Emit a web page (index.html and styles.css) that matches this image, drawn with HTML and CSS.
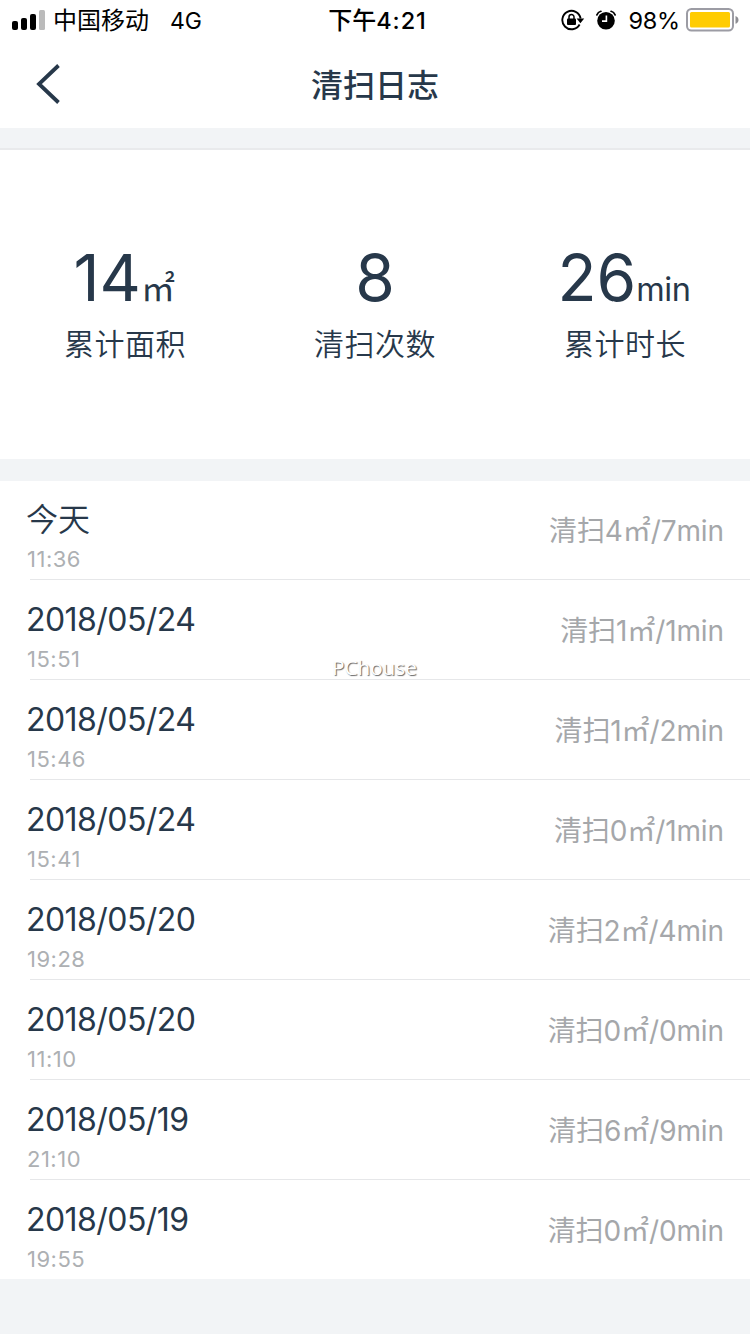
FILE: index.html
```
<!DOCTYPE html>
<html lang="zh-CN">
  <head>
    <meta charset="UTF-8" />
    <meta name="viewport" content="width=device-width, initial-scale=1.0" />
    <title>清扫日志</title>
    <link rel="stylesheet" href="styles.css">
  </head>
  <body>
    <div class="status-bar">
      <div class="status-left">
        <svg class="signal" width="34" height="22" viewBox="0 0 34 22">
          <rect x="0" y="12" width="6" height="9" rx="2" />
          <rect x="9" y="9" width="6" height="12" rx="2" />
          <rect x="18" y="5" width="6" height="16" rx="2" />
          <rect x="27" y="1" width="6" height="20" rx="1.5" fill="#bbb" />
        </svg>
        <span class="carrier">中国移动</span>
        <span class="network">4G</span>
      </div>
      <div class="status-time">下午<span>4:21</span></div>
      <div class="status-right">
        <svg class="lock" width="24" height="22" viewBox="0 0 24 22">
          <path d="M18.6 15.5A9.2 9.2 0 1 1 19.6 9.5" fill="none" stroke="#000" stroke-width="1.9" />
          <path d="M15.6 9.6h7.6l-3.8 4.6z" />
          <rect x="6" y="9.4" width="9" height="6.6" rx="1" />
          <path d="M8 10V8a2.5 2.5 0 0 1 5 0v2" fill="none" stroke="#000" stroke-width="1.5" />
        </svg>
        <svg class="alarm" width="20" height="20" viewBox="0 0 20 20">
          <circle cx="10" cy="10.7" r="8.8" />
          <path d="M.9 4.9A6 6 0 0 1 4.9 1.3M19.1 4.9A6 6 0 0 0 15.1 1.3" fill="none" stroke="#000" stroke-width="1.7" stroke-linecap="round" />
          <path d="M10.4 5.4v5.7H6" fill="none" stroke="#fff" stroke-width="1.6" />
        </svg>
        <span class="percent">98%</span>
        <svg class="battery" width="53" height="24" viewBox="0 0 53 24">
          <rect x="1" y="1" width="46" height="21.5" rx="4.5" fill="#fff" stroke="#9c9ca4" stroke-width="2" />
          <rect x="4" y="4" width="40" height="15.5" rx="1.5" fill="#fc0" />
          <path d="M49.5 8q3 1.2 3 3.9t-3 3.9z" fill="#8e8e93" />
        </svg>
      </div>
    </div>
    <header>
      <svg class="back" width="26" height="42" viewBox="0 0 26 42">
        <path d="M22.5 2.5L3 21L22.5 39.5" fill="none" stroke="#27384a" stroke-width="3.8" />
      </svg>
      <h1>清扫日志</h1>
    </header>
    <section class="summary">
      <div class="stat">
        <div class="value">14<span class="unit sqm">㎡</span></div>
        <div class="label">累计面积</div>
      </div>
      <div class="stat">
        <div class="value">8</div>
        <div class="label">清扫次数</div>
      </div>
      <div class="stat">
        <div class="value">26<span class="unit">min</span></div>
        <div class="label">累计时长</div>
      </div>
    </section>
    <ul class="log">
      <li>
        <div class="when"><p class="date today">今天</p><p class="time">11:36</p></div>
        <p class="detail">清扫4㎡/7min</p>
      </li>
      <li>
        <div class="when"><p class="date">2018/05/24</p><p class="time">15:51</p></div>
        <p class="detail">清扫1㎡/1min</p>
      </li>
      <li>
        <div class="when"><p class="date">2018/05/24</p><p class="time">15:46</p></div>
        <p class="detail">清扫1㎡/2min</p>
      </li>
      <li>
        <div class="when"><p class="date">2018/05/24</p><p class="time">15:41</p></div>
        <p class="detail">清扫0㎡/1min</p>
      </li>
      <li>
        <div class="when"><p class="date">2018/05/20</p><p class="time">19:28</p></div>
        <p class="detail">清扫2㎡/4min</p>
      </li>
      <li>
        <div class="when"><p class="date">2018/05/20</p><p class="time">11:10</p></div>
        <p class="detail">清扫0㎡/0min</p>
      </li>
      <li>
        <div class="when"><p class="date">2018/05/19</p><p class="time">21:10</p></div>
        <p class="detail">清扫6㎡/9min</p>
      </li>
      <li>
        <div class="when"><p class="date">2018/05/19</p><p class="time">19:55</p></div>
        <p class="detail">清扫0㎡/0min</p>
      </li>
    </ul>
    <div class="watermark">PChouse</div>
  </body>
</html>
```

FILE: styles.css
```
* {
  box-sizing: border-box;
}
body {
  position: relative;
  margin: 0;
  height: 1334px;
  overflow: hidden;
  background-color: #f2f4f6;
  color: #27384a;
  font-family: Inter, "Noto Sans CJK SC", sans-serif;
}
h1,
p,
ul {
  margin: 0;
  padding: 0;
}
svg {
  display: block;
  flex: none;
}

.status-bar {
  display: grid;
  grid-template-columns: 1fr auto 1fr;
  align-items: center;
  height: 40px;
  padding: 0 11px 0 12px;
  background-color: #fff;
  color: #000;
  font-size: 24px;
  line-height: 38px;
  white-space: nowrap;
}
.status-left,
.status-right {
  display: flex;
  align-items: center;
}
.status-right {
  justify-content: flex-end;
}
.carrier,
.network,
.status-time,
.percent {
  padding-top: 2px;
}
.carrier {
  margin-left: 7px;
}
.network {
  margin-left: 21px;
  font-size: 23px;
}
.status-time {
  padding-left: 4px;
  font-weight: 500;
}
.status-time span {
  font-size: 23.5px;
  font-weight: 550;
  letter-spacing: 0.9px;
}
.alarm {
  margin: 0 12px 0 11px;
}
.percent {
  font-size: 23.5px;
  letter-spacing: -0.2px;
}
.battery {
  margin-left: 6px;
}

header {
  display: grid;
  grid-template-columns: 1fr auto 1fr;
  align-items: center;
  height: 88px;
  padding: 0 36px;
  background-color: #fff;
}
h1 {
  padding-top: 4px;
  font-size: 32px;
  font-weight: 500;
  line-height: 84px;
}

.summary {
  display: grid;
  grid-template-columns: repeat(3, 250px);
  height: 311px;
  margin-top: 20px;
  padding-top: 92px;
  border-top: 2px solid #e9eaec;
  background-color: #fff;
  text-align: center;
}
.value {
  height: 76px;
  font-size: 64px;
  line-height: 72px;
}
.unit {
  margin-right: 2px;
  font-size: 32.5px;
  letter-spacing: -0.4px;
}
.sqm {
  font-size: 34px;
}
.label {
  margin-top: 4px;
  font-size: 30px;
  font-weight: 350;
  line-height: 44px;
  letter-spacing: 0.5px;
}

.log {
  margin-top: 22px;
  background-color: #fff;
  list-style: none;
}
.log li {
  display: flex;
  align-items: center;
  justify-content: space-between;
  height: 100px;
  padding: 0 26px 0 27px;
  background: linear-gradient(#e6e7e9, #e6e7e9) 30px 98px / 100% 1px no-repeat;
}
.log li:last-child {
  height: 98px;
  padding-top: 2px;
  background: none;
}
.when {
  padding-top: 13px;
}
.date {
  margin-left: -1px;
  font-size: 32px;
  line-height: 44px;
  letter-spacing: -0.55px;
}
.today {
  font-weight: 350;
  letter-spacing: 0;
}
.time {
  color: #adb0b3;
  font-size: 22px;
  line-height: 35px;
  letter-spacing: 0.5px;
}
.detail {
  color: #a5a7aa;
  font-size: 28px;
  line-height: 40px;
  letter-spacing: -0.1px;
}

.watermark {
  position: absolute;
  top: 653px;
  left: 332px;
  color: #fff;
  font: 20.7px/28px "Open Sans", sans-serif;
  text-shadow: 1px 1px 1px #666;
}
```
